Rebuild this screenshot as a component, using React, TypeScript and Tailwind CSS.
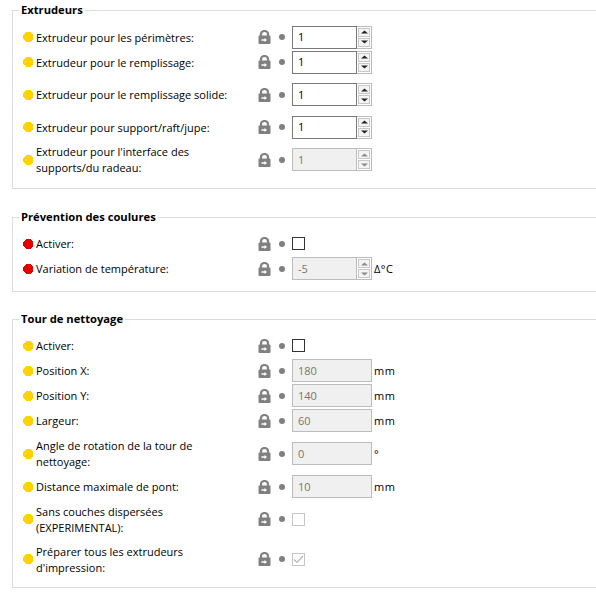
import React from 'react';

type Row = {
  label: React.ReactNode;
  h: string;
  level: 'yellow' | 'red';
  kind: 'spin' | 'spinOff' | 'input' | 'check' | 'checkOff' | 'checkedOff';
  value?: string;
  unit?: string;
};

const Bullet = ({ level }: { level: 'yellow' | 'red' }) => (
  <svg width="10" height="10" viewBox="0 0 10 10" className="shrink-0" shapeRendering="crispEdges">
    <polygon
      points="3,0 7,0 10,3 10,7 7,10 3,10 0,7 0,3"
      fill={level === 'red' ? '#e30000' : '#ffd200'}
    />
  </svg>
);

const Lock = () => (
  <svg width="13" height="14" viewBox="0 0 13 14" className="shrink-0">
    <path d="M3 7V4a3.5 3 0 0 1 7 0v3" fill="none" stroke="#808080" strokeWidth="2.2" />
    <rect x="0.5" y="5.5" width="12" height="8.5" rx="1" fill="#808080" />
    <path d="M3.5 9.2h3V8l2.5 2-2.5 2v-1.2h-3z" fill="#fff" />
  </svg>
);

const Arrow = ({ up, off }: { up?: boolean; off?: boolean }) => (
  <svg width="7" height="4" viewBox="0 0 7 4">
    <polygon
      points={up ? '3.5,0.5 7,3.5 0,3.5' : '0,0.5 7,0.5 3.5,3.5'}
      fill={off ? '#8a8a8a' : '#222'}
    />
  </svg>
);

const Spin = ({ value, off }: { value?: string; off?: boolean }) => (
  <div className="flex h-[23px] w-[80px]">
    <div
      className={
        off
          ? 'flex w-[65px] items-center border border-[#bcbcbc] bg-[#f0f0f0] pt-px pl-[5px] text-[#6f7a6f]'
          : 'flex w-[65px] items-center border border-[#7a7a7a] bg-white pt-px pl-[5px] text-black'
      }
    >
      {value}
    </div>
    <div className="flex w-[15px] flex-col gap-px border border-l-0 border-[#bcbcbc] p-px">
      <div className="flex flex-1 items-center justify-center border border-[#c8c8c8] bg-[#f4f4f4]">
        <Arrow up off={off} />
      </div>
      <div className="flex flex-1 items-center justify-center border border-[#c8c8c8] bg-[#f4f4f4]">
        <Arrow off={off} />
      </div>
    </div>
  </div>
);

const Field = ({ row }: { row: Row }) => {
  if (row.kind === 'spin') return <Spin value={row.value} />;
  if (row.kind === 'spinOff') return <Spin value={row.value} off />;
  if (row.kind === 'input')
    return (
      <div className="flex h-[23px] w-[80px] items-center border border-[#bcbcbc] bg-[#f0f0f0] pt-px pl-[5px] text-[#7f7465]">
        {row.value}
      </div>
    );
  if (row.kind === 'check') return <div className="size-[13px] border border-[#333] bg-white" />;
  return (
    <div className="flex size-[13px] items-center justify-center border border-[#c4c4c4] bg-white">
      {row.kind === 'checkedOff' && (
        <svg width="11" height="9" viewBox="0 0 11 9">
          <path d="M1 4.5 4 7.5 10 1" fill="none" stroke="#b4b4b4" strokeWidth="1.2" />
        </svg>
      )}
    </div>
  );
};

const Group = ({ title, rows, className }: { title: string; rows: Row[]; className: string }) => (
  <fieldset className={`border border-r-0 border-[#dcdcdc] pl-[10px] ${className}`}>
    <legend className="-ml-[4px] px-[2px] text-[11.2px] leading-[16px] font-bold">{title}</legend>
    {rows.map((row, index) => (
      <div key={index} className={`flex items-center ${row.h}`}>
        <Bullet level={row.level} />
        <div className="ml-[3px] w-[222px] shrink-0 pt-px leading-[16px]">{row.label}</div>
        <Lock />
        <span className="ml-[8px] size-[6px] shrink-0 rounded-full bg-[#808080]" />
        <div className="ml-[7px]">
          <Field row={row} />
        </div>
        {row.unit && <span className="ml-[2px] pt-[2px] tracking-[0.5px]">{row.unit}</span>}
      </div>
    ))}
  </fieldset>
);

const extrudeurs: Row[] = [
  { label: 'Extrudeur pour les périmètres:', h: 'h-[24px]', level: 'yellow', kind: 'spin', value: '1' },
  { label: 'Extrudeur pour le remplissage:', h: 'h-[26px]', level: 'yellow', kind: 'spin', value: '1' },
  { label: 'Extrudeur pour le remplissage solide:', h: 'h-[39px]', level: 'yellow', kind: 'spin', value: '1' },
  { label: 'Extrudeur pour support/raft/jupe:', h: 'h-[26px]', level: 'yellow', kind: 'spin', value: '1' },
  {
    label: (
      <>
        Extrudeur pour l'interface des
        <br />
        supports/du radeau:
      </>
    ),
    h: 'h-[39px]',
    level: 'yellow',
    kind: 'spinOff',
    value: '1',
  },
];

const coulures: Row[] = [
  { label: 'Activer:', h: 'h-[25px]', level: 'red', kind: 'check' },
  { label: 'Variation de température:', h: 'h-[25px]', level: 'red', kind: 'spinOff', value: '-5', unit: 'Δ°C' },
];

const tour: Row[] = [
  { label: 'Activer:', h: 'h-[25px]', level: 'yellow', kind: 'check' },
  { label: 'Position X:', h: 'h-[25px]', level: 'yellow', kind: 'input', value: '180', unit: 'mm' },
  { label: 'Position Y:', h: 'h-[25px]', level: 'yellow', kind: 'input', value: '140', unit: 'mm' },
  { label: 'Largeur:', h: 'h-[25px]', level: 'yellow', kind: 'input', value: '60', unit: 'mm' },
  {
    label: (
      <>
        Angle de rotation de la tour de
        <br />
        nettoyage:
      </>
    ),
    h: 'h-[41px]',
    level: 'yellow',
    kind: 'input',
    value: '0',
    unit: '°',
  },
  { label: 'Distance maximale de pont:', h: 'h-[25px]', level: 'yellow', kind: 'input', value: '10', unit: 'mm' },
  {
    label: (
      <>
        Sans couches dispersées
        <br />
        (EXPERIMENTAL):
      </>
    ),
    h: 'h-[40px]',
    level: 'yellow',
    kind: 'checkOff',
  },
  {
    label: (
      <>
        Préparer tous les extrudeurs
        <br />
        d'impression:
      </>
    ),
    h: 'h-[40px]',
    level: 'yellow',
    kind: 'checkedOff',
  },
];

export default function App() {
  return (
    <div className="h-[593px] w-[596px] overflow-hidden bg-white pt-[2px] pl-[12px] font-['Open_Sans',sans-serif] text-[11px] text-black">
      <Group title="Extrudeurs" rows={extrudeurs} className="h-[187px] w-[590px] pt-[7px]" />
      <Group title="Prévention des coulures" rows={coulures} className="mt-[20px] h-[83px] w-[590px] pt-[6px]" />
      <Group title="Tour de nettoyage" rows={tour} className="mt-[19px] h-[277px] w-[590px] pt-[6px]" />
    </div>
  );
}
